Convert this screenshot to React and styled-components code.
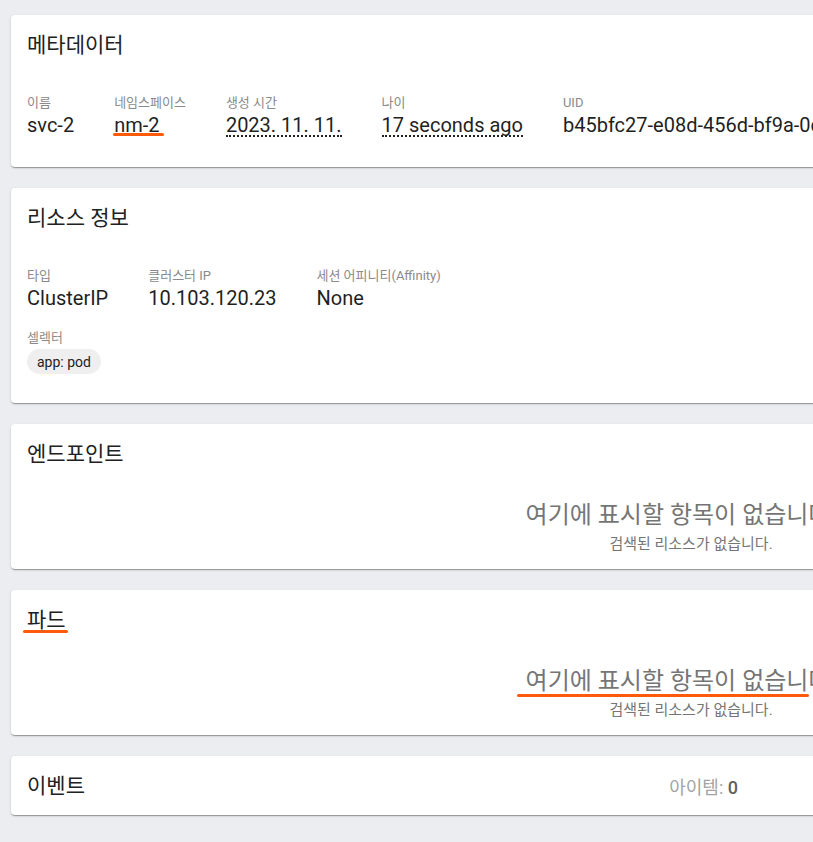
import React from "react";
import styled, { createGlobalStyle } from "styled-components";

const GlobalStyle = createGlobalStyle`
  html, body {
    margin: 0;
    padding: 0;
    background: #ecedf0;
    overflow: hidden;
  }
  body {
    font-family: Roboto, "Noto Sans CJK KR", sans-serif;
    color: rgba(0, 0, 0, 0.87);
  }
`;

const Page = styled.div`
  display: flex;
  flex-direction: column;
  gap: 20px;
  padding: 14px 0 40px 11px;
  width: 1360px;
`;

const Card = styled.section`
  background: #fff;
  border-radius: 4px;
  box-shadow: 0 2px 1px -1px rgba(0, 0, 0, 0.2), 0 1px 1px 0 rgba(0, 0, 0, 0.14),
    0 1px 3px 0 rgba(0, 0, 0, 0.12);
  padding: 16px 16px ${(p) => p.$bottom || 16}px;
  margin-top: 1px;
`;

const Header = styled.div`
  display: flex;
  align-items: center;
`;

const Title = styled.h2`
  margin: 0;
  font-size: 21px;
  font-weight: 400;
  line-height: 28px;
  color: #212121;
`;

// hand-drawn orange marker under a piece of text
const Marked = styled.span`
  position: relative;
  &::after {
    content: "";
    position: absolute;
    left: ${(p) => p.$left}px;
    width: ${(p) => p.$width}px;
    bottom: ${(p) => p.$bottom}px;
    height: 3px;
    border-radius: 2px;
    background: #ff5a0a;
  }
`;

const Fields = styled.div`
  display: flex;
  gap: 40px;
  margin-top: ${(p) => p.$top || 36}px;
`;

const Field = styled.div`
  display: flex;
  flex-direction: column;
`;

const Label = styled.div`
  font-size: 13px;
  line-height: 16px;
  color: #8a8a8a;
`;

const Value = styled.div`
  font-size: 20px;
  line-height: 28px;
  color: #1f1f1f;
  white-space: nowrap;
`;

const Dotted = styled.span`
  display: inline-block;
  line-height: 19px;
  border-bottom: 2px dotted #222;
`;

const Chip = styled.span`
  display: inline-flex;
  align-items: center;
  align-self: flex-start;
  height: 25px;
  margin-top: 3px;
  padding: 0 10px;
  border-radius: 13px;
  background: #efefef;
  font-size: 14px;
  color: #222;
`;

const Empty = styled.div`
  display: flex;
  flex-direction: column;
  align-items: center;
  margin-top: 31px;
`;

const EmptyTitle = styled.div`
  font-size: 24px;
  line-height: 32px;
  padding-right: 26px;
  color: #757575;
  white-space: nowrap;
`;

const EmptyText = styled.div`
  font-size: 15px;
  line-height: 16px;
  margin-top: 5px;
  color: #757575;
`;

const ItemCount = styled.div`
  margin-left: auto;
  margin-right: 617px;
  font-size: 18px;
  color: #a3a3a3;
  b {
    color: #616161;
    font-weight: 500;
  }
`;

const EmptyState = ({ marked }) => (
  <Empty>
    <EmptyTitle>
      {marked ? (
        <Marked $left={-9} $width={292} $bottom={-2}>
          여기에 표시할 항목이 없습니다
        </Marked>
      ) : (
        "여기에 표시할 항목이 없습니다"
      )}
    </EmptyTitle>
    <EmptyText>검색된 리소스가 없습니다.</EmptyText>
  </Empty>
);

export default function App() {
  return (
    <>
      <GlobalStyle />
      <Page>
        <Card $bottom={28}>
          <Title>메타데이터</Title>
          <Fields>
            <Field>
              <Label>이름</Label>
              <Value>svc-2</Value>
            </Field>
            <Field>
              <Label>네임스페이스</Label>
              <Value>
                <Marked $left={-1} $width={51} $bottom={1}>
                  nm-2
                </Marked>
              </Value>
            </Field>
            <Field>
              <Label>생성 시간</Label>
              <Value>
                <Dotted>2023. 11. 11.</Dotted>
              </Value>
            </Field>
            <Field>
              <Label>나이</Label>
              <Value>
                <Dotted>17 seconds ago</Dotted>
              </Value>
            </Field>
            <Field>
              <Label>UID</Label>
              <Value>b45bfc27-e08d-456d-bf9a-0d3a1c7e2f54</Value>
            </Field>
          </Fields>
        </Card>

        <Card $bottom={29}>
          <Title>리소스 정보</Title>
          <Fields>
            <Field>
              <Label>타입</Label>
              <Value>ClusterIP</Value>
            </Field>
            <Field>
              <Label>클러스터 IP</Label>
              <Value>10.103.120.23</Value>
            </Field>
            <Field>
              <Label>세션 어피니티(Affinity)</Label>
              <Value>None</Value>
            </Field>
          </Fields>
          <Fields $top={18}>
            <Field>
              <Label>셀렉터</Label>
              <Chip>app: pod</Chip>
            </Field>
          </Fields>
        </Card>

        <Card $bottom={17}>
          <Title>엔드포인트</Title>
          <EmptyState />
        </Card>

        <Card $bottom={17}>
          <Title>
            <Marked $left={-4} $width={45} $bottom={-1}>
              파드
            </Marked>
          </Title>
          <EmptyState marked />
        </Card>

        <Card $bottom={15}>
          <Header>
            <Title>이벤트</Title>
            <ItemCount>
              아이템: <b>0</b>
            </ItemCount>
          </Header>
        </Card>
      </Page>
    </>
  );
}
